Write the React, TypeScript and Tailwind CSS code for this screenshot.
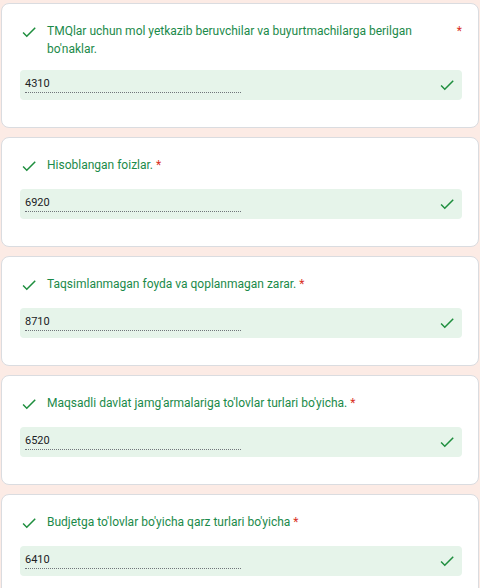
import React from "react";

const items = [
  { title: "TMQlar uchun mol yetkazib beruvchilar va buyurtmachilarga berilgan bo'naklar.", value: "4310" },
  { title: "Hisoblangan foizlar.", value: "6920" },
  { title: "Taqsimlanmagan foyda va qoplanmagan zarar.", value: "8710" },
  { title: "Maqsadli davlat jamg'armalariga to'lovlar turlari bo'yicha.", value: "6520" },
  { title: "Budjetga to'lovlar bo'yicha qarz turlari bo'yicha", value: "6410" },
];

function Check() {
  return (
    <svg width="18" height="18" viewBox="0 0 24 24" className="shrink-0" fill="#1e8e3e">
      <path d="M9 16.17L4.83 12l-1.42 1.41L9 19 21 7l-1.41-1.41z" />
    </svg>
  );
}

export default function App() {
  return (
    <div
      className="w-[480px] h-[588px] overflow-hidden bg-[#fcebe5] pt-[3px] flex flex-col gap-[9px]"
      style={{ fontFamily: "Roboto, 'Liberation Sans', sans-serif" }}
    >
      {items.map((it) => (
        <div
          key={it.value}
          className="ml-[1px] w-[478px] shrink-0 bg-white border border-[#dadce0] rounded-[8px] pt-[18px] pb-[27px] pl-[18px] pr-[16px]"
        >
          <div className="flex items-start min-h-[21px]">
            <div className="mt-[1px]">
              <Check />
            </div>
            <div className="ml-[9px] flex items-start min-w-0">
              <div className="text-[12px] leading-[18px] text-[#1b8a4a]">{it.title}</div>
              <span className="ml-[3px] text-[12px] leading-[18px] text-[#d93025]">*</span>
            </div>
          </div>
          <div className="mt-[12px] h-[30px] bg-[#e6f4ea] rounded-[4px] flex items-start pt-[6px] pl-[5px] pr-[6px]">
            <div className="w-[216px] h-[17px] border-b border-dotted border-[#70757a] text-[11px] leading-[15px] text-[#202124]">
              {it.value}
            </div>
            <div className="ml-auto">
              <Check />
            </div>
          </div>
        </div>
      ))}
    </div>
  );
}
